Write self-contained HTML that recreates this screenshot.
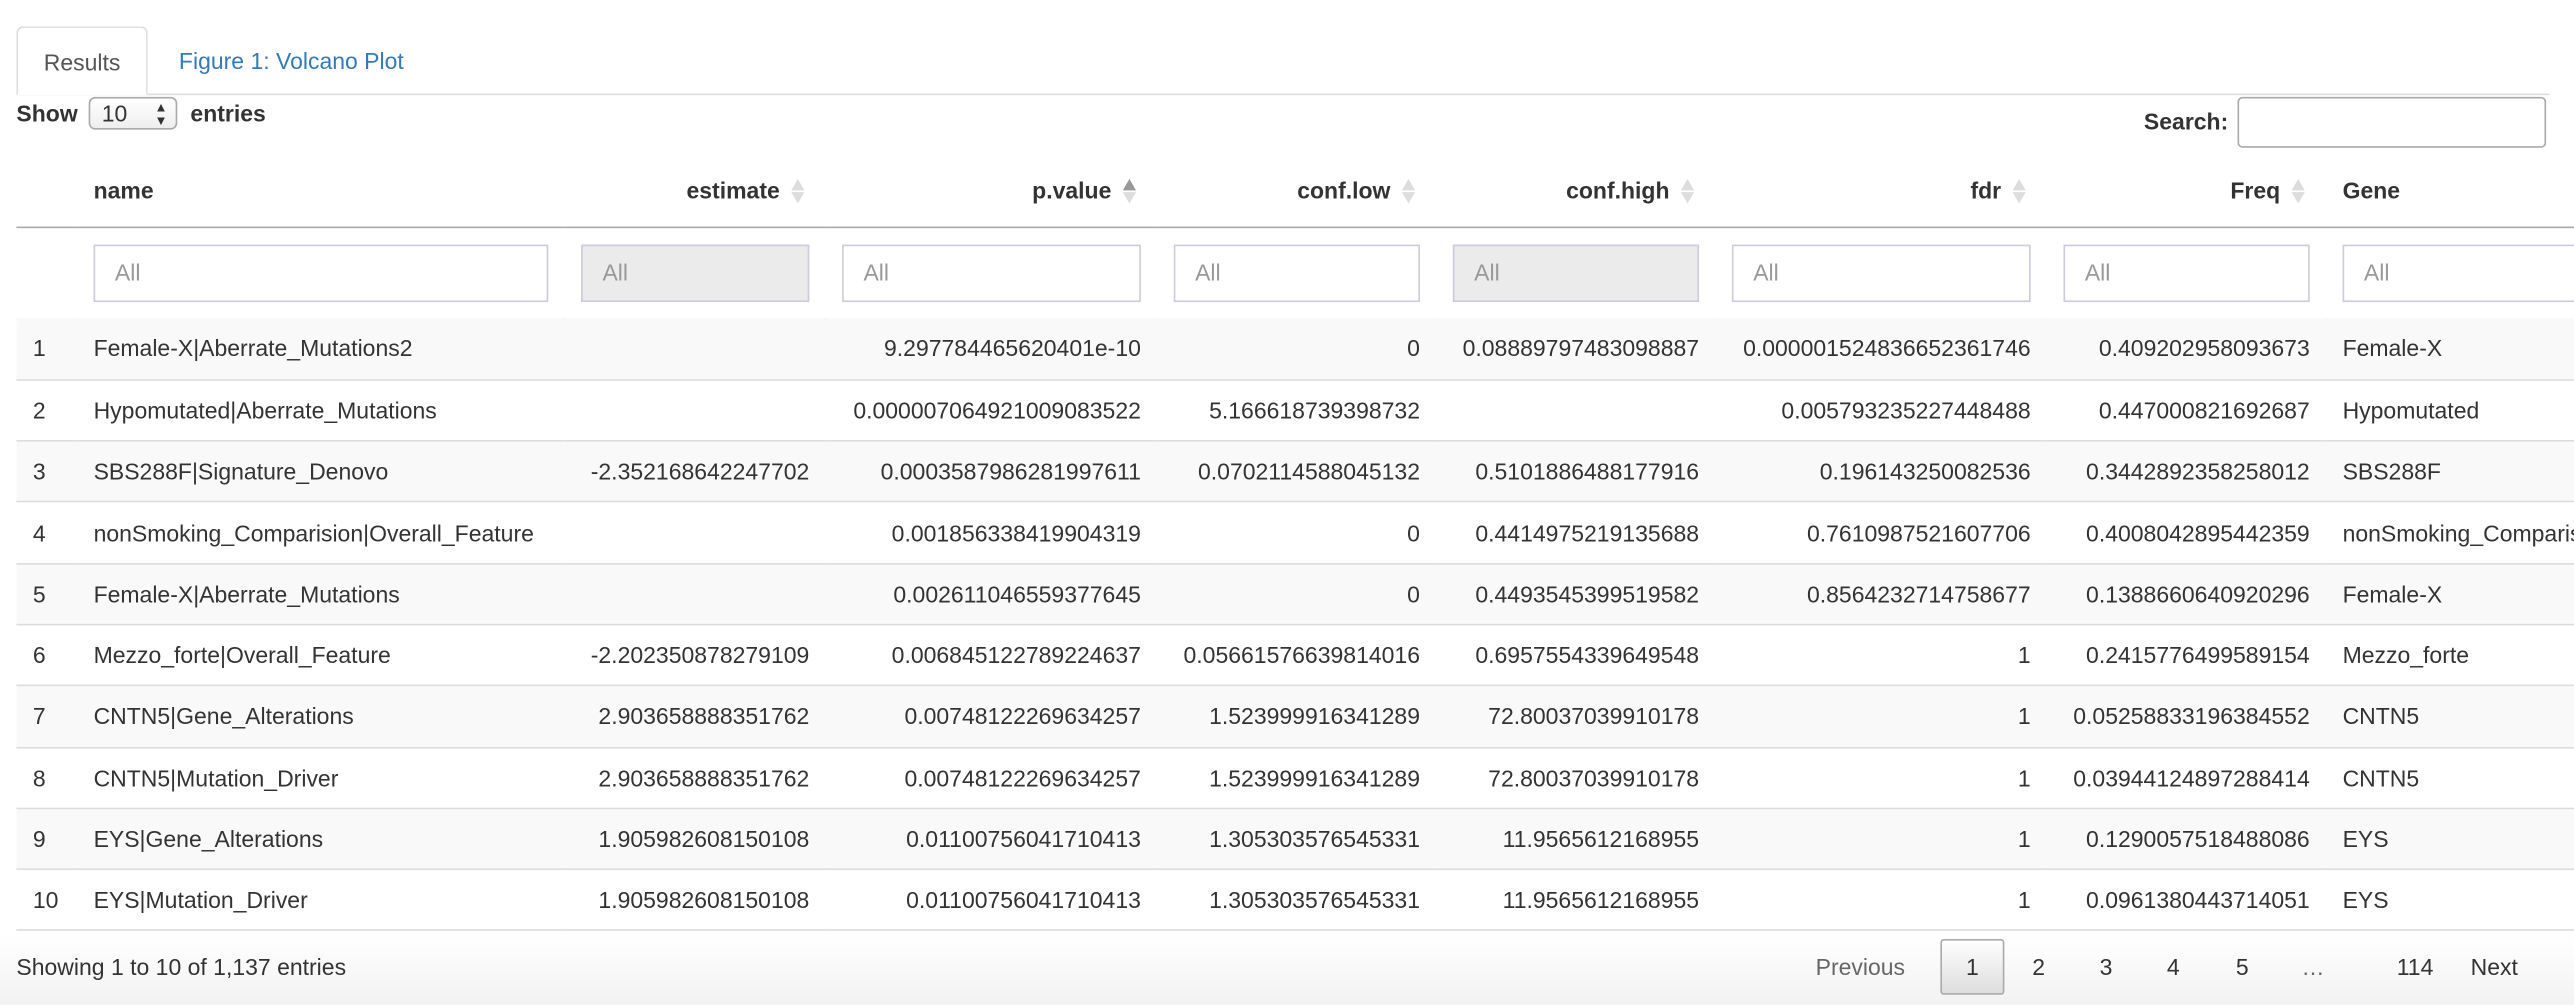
<!DOCTYPE html>
<html><head><meta charset="utf-8">
<style>
html,body{margin:0;padding:0;width:2574px;height:1004px;overflow:hidden;background:#fff}
#w{position:absolute;left:0;top:0;width:1568px;height:612px;transform:scale(1.6416);transform-origin:0 0;font-family:"Liberation Sans",Arial,sans-serif;font-size:14px;color:#333;overflow:hidden;background:linear-gradient(#fff 0,#fff 570px,#f2f2f2 612px)}
.abs{position:absolute}
.tab{left:10px;top:16px;width:80px;height:42px;border:1px solid #ddd;border-bottom:1px solid #fff;border-radius:4px 4px 0 0;background:#fff;text-align:center;line-height:42px;color:#555;box-sizing:border-box;z-index:2}
.navline{left:10px;top:57px;width:1543px;height:1px;background:#ddd}
b{font-weight:bold}
.sel{left:54px;top:59px;width:54px;height:20px;border:1px solid #aaa;border-radius:4px;box-sizing:border-box;background:linear-gradient(#fff,#eee);font-size:14px;line-height:18px;padding-left:7px}
.srch{left:1363px;top:59px;width:188px;height:31px;border:1px solid #aaa;border-radius:3px;box-sizing:border-box}
table{position:absolute;left:10px;top:94px;border-collapse:collapse;table-layout:fixed;width:1700px}
td,th{padding:0 10px;white-space:nowrap;overflow:hidden;box-sizing:border-box}
th{height:44px;font-weight:bold;text-align:right;border-bottom:1px solid #aaa;position:relative}
th.l{text-align:left}
th .t{padding-right:18px}
.si{position:absolute;top:15px;width:0;height:0}
.si:before{content:"";position:absolute;left:0;top:0;border-left:4.5px solid transparent;border-right:4.5px solid transparent;border-bottom:7px solid #ddd}
.si:after{content:"";position:absolute;left:0;top:8px;border-left:4.5px solid transparent;border-right:4.5px solid transparent;border-top:7px solid #ddd}
.si.up:before{border-bottom-color:#999}
tr.f td{height:56px;border-bottom:1px solid #aaa}
.in{height:35px;border:1px solid #ccd;box-sizing:border-box;color:#999;line-height:33px;padding-left:12px;font-size:14px}
.in.d{background:#ebebeb}
tr.r td{height:37.3px;border-bottom:1px solid #ddd;text-align:right}
tr.r td.l{text-align:left}
tr.r:nth-child(odd) td{background:#f9f9f9}
.pg{top:572px;height:34px;line-height:34px;color:#333}
</style></head><body><div id="w">
<div class="abs tab">Results</div>
<div class="abs" style="left:109px;top:16px;line-height:42px;color:#337ab7">Figure 1: Volcano Plot</div>
<div class="abs navline"></div>
<div class="abs" style="left:10px;top:61px"><b>Show</b></div>
<div class="abs sel">10<span style="position:absolute;right:5px;top:0;font-size:8px;line-height:8px;top:2px">▲<br>▼</span></div>
<div class="abs" style="left:116px;top:61px"><b>entries</b></div>
<div class="abs" style="left:1306px;top:66px"><b>Search:</b></div>
<div class="abs srch"></div>
<table>
<colgroup><col style="width:37px"><col style="width:297px"><col style="width:159px"><col style="width:202px"><col style="width:170px"><col style="width:170px"><col style="width:202px"><col style="width:170px"><col style="width:293px"></colgroup>
<thead><tr><th></th><th class="l">name<span class="si" style="left:311px"></span></th><th><span class="t">estimate</span><span class="si" style="left:138px"></span></th><th><span class="t">p.value</span><span class="si up" style="left:181px"></span></th><th><span class="t">conf.low</span><span class="si" style="left:149px"></span></th><th><span class="t">conf.high</span><span class="si" style="left:149px"></span></th><th><span class="t">fdr</span><span class="si" style="left:181px"></span></th><th><span class="t">Freq</span><span class="si" style="left:149px"></span></th><th class="l">Gene</th></tr></thead>
<tbody>
<tr class="f"><td></td><td><div class="in">All</div></td><td><div class="in d">All</div></td><td><div class="in">All</div></td><td><div class="in">All</div></td><td><div class="in d">All</div></td><td><div class="in">All</div></td><td><div class="in">All</div></td><td><div class="in">All</div></td></tr>
</tbody>
</table>
<table style="top:194px">
<colgroup><col style="width:37px"><col style="width:297px"><col style="width:159px"><col style="width:202px"><col style="width:170px"><col style="width:170px"><col style="width:202px"><col style="width:170px"><col style="width:293px"></colgroup>
<tbody>
<tr class="r"><td class="l">1</td><td class="l">Female-X|Aberrate_Mutations2</td><td></td><td>9.297784465620401e-10</td><td>0</td><td>0.08889797483098887</td><td>0.000001524836652361746</td><td>0.409202958093673</td><td class="l">Female-X</td></tr>
<tr class="r"><td class="l">2</td><td class="l">Hypomutated|Aberrate_Mutations</td><td></td><td>0.000007064921009083522</td><td>5.166618739398732</td><td></td><td>0.005793235227448488</td><td>0.447000821692687</td><td class="l">Hypomutated</td></tr>
<tr class="r"><td class="l">3</td><td class="l">SBS288F|Signature_Denovo</td><td>-2.352168642247702</td><td>0.0003587986281997611</td><td>0.0702114588045132</td><td>0.5101886488177916</td><td>0.196143250082536</td><td>0.3442892358258012</td><td class="l">SBS288F</td></tr>
<tr class="r"><td class="l">4</td><td class="l">nonSmoking_Comparision|Overall_Feature</td><td></td><td>0.001856338419904319</td><td>0</td><td>0.4414975219135688</td><td>0.7610987521607706</td><td>0.4008042895442359</td><td class="l">nonSmoking_Comparision</td></tr>
<tr class="r"><td class="l">5</td><td class="l">Female-X|Aberrate_Mutations</td><td></td><td>0.002611046559377645</td><td>0</td><td>0.4493545399519582</td><td>0.8564232714758677</td><td>0.1388660640920296</td><td class="l">Female-X</td></tr>
<tr class="r"><td class="l">6</td><td class="l">Mezzo_forte|Overall_Feature</td><td>-2.202350878279109</td><td>0.006845122789224637</td><td>0.05661576639814016</td><td>0.6957554339649548</td><td>1</td><td>0.2415776499589154</td><td class="l">Mezzo_forte</td></tr>
<tr class="r"><td class="l">7</td><td class="l">CNTN5|Gene_Alterations</td><td>2.903658888351762</td><td>0.00748122269634257</td><td>1.523999916341289</td><td>72.80037039910178</td><td>1</td><td>0.05258833196384552</td><td class="l">CNTN5</td></tr>
<tr class="r"><td class="l">8</td><td class="l">CNTN5|Mutation_Driver</td><td>2.903658888351762</td><td>0.00748122269634257</td><td>1.523999916341289</td><td>72.80037039910178</td><td>1</td><td>0.03944124897288414</td><td class="l">CNTN5</td></tr>
<tr class="r"><td class="l">9</td><td class="l">EYS|Gene_Alterations</td><td>1.905982608150108</td><td>0.01100756041710413</td><td>1.305303576545331</td><td>11.9565612168955</td><td>1</td><td>0.1290057518488086</td><td class="l">EYS</td></tr>
<tr class="r"><td class="l">10</td><td class="l">EYS|Mutation_Driver</td><td>1.905982608150108</td><td>0.01100756041710413</td><td>1.305303576545331</td><td>11.9565612168955</td><td>1</td><td>0.0961380443714051</td><td class="l">EYS</td></tr>
</tbody></table>
<div class="abs" style="left:10px;top:581px">Showing 1 to 10 of 1,137 entries</div>
<div class="abs pg" style="left:1106px;color:#666">Previous</div>
<div class="abs pg" style="left:1182px;width:39px;box-sizing:border-box;border:1px solid #aaa;border-radius:2px;background:linear-gradient(#fff,#ddd);text-align:center;line-height:32px">1</div>
<div class="abs pg" style="left:1238px">2</div>
<div class="abs pg" style="left:1279px">3</div>
<div class="abs pg" style="left:1320px">4</div>
<div class="abs pg" style="left:1362px">5</div>
<div class="abs pg" style="left:1402px;color:#666">…</div>
<div class="abs pg" style="left:1460px">114</div>
<div class="abs pg" style="left:1505px">Next</div>
</div></body></html>
